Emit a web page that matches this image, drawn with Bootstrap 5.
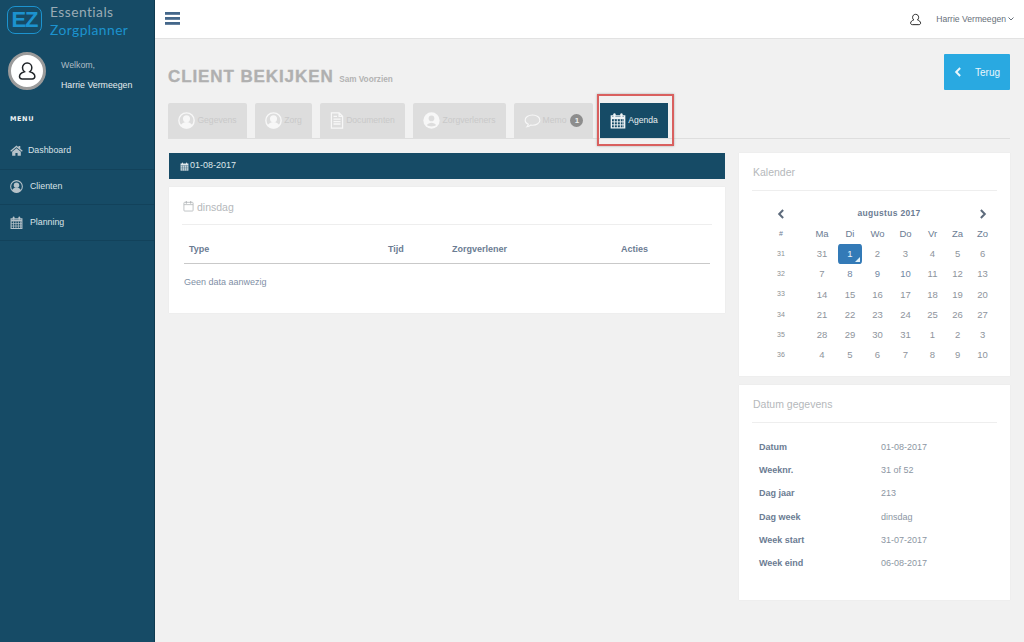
<!DOCTYPE html>
<html lang="nl">
<head>
<meta charset="utf-8">
<title>Client bekijken</title>
<link href="https://cdn.jsdelivr.net/npm/bootstrap@5.3.0/dist/css/bootstrap.min.css" rel="stylesheet">
<style>
html,body{height:100%}
body{background:#f1f1f1;font-family:"Liberation Sans",Arial,sans-serif;font-size:9px;color:#7187a3;overflow:hidden}
.shell{width:1024px;height:642px}
.side{width:155px;flex:none;background:#164b66;color:#dfe6ea;border-right:1px solid #0f3a50}
.brand{height:38px;padding:3px 0 0 7px}
.brand-mark{width:35px;height:28px;border:1.5px solid #1c93cf;border-radius:8px;color:#1c93cf;font:700 22px/25px "Liberation Sans",sans-serif;letter-spacing:-1px;text-align:center;margin-top:3px}
.brand-txt{margin-left:8px;font:400 13.8px/17.500px "Lato",sans-serif;letter-spacing:.45px}
.brand-a{color:#9aabb5}.brand-b{color:#1c93cf}
.who{padding:14px 0 0 8px;height:70px}
.avatar{width:38px;height:38px;border-radius:50%;background:#fff;border:3px solid #9b9b9b;flex:none}
.who-txt{margin-left:15px;font-size:8.8px;padding-top:7px}
.who-a{color:#aebcc5;height:20px;line-height:12px}
.who-b{color:#e6ecef;line-height:12px}
.menu-h{font:700 6.5px/10px "DejaVu Sans",sans-serif;letter-spacing:.6px;color:#eef2f4;padding:6px 0 0 10px;height:25px}
.nav-i{height:35.5px;color:#d9e2e7;font-size:8.8px;text-decoration:none;border-bottom:1px solid #12425b;gap:7px;padding-left:10px}
.nav-i svg{flex:none;color:#b6c2c9}
.nav-i.first{height:36.5px;gap:5px;padding-bottom:1px}
.main{flex:1;min-width:0}
.top{height:39px;background:#fff;border-bottom:1px solid #e2e2e2;padding:0 10px 0 10px}
.burger{width:15px;height:13px;fill:#44678a;margin-bottom:1px}
.usr{font-size:8.6px;color:#67707a;white-space:nowrap}
.usr-i{margin-right:14px;margin-left:-1px;color:#222}
.usr-c{margin-left:2px}
.body-wrap{padding:15px 14px 0 13px}
.head-row{height:49px}
.page-t{font-size:17px;line-height:20px;font-weight:700;color:#b0b0b0;letter-spacing:.9px;margin:13px 0 0;white-space:nowrap;-webkit-text-stroke:.35px #b0b0b0}
.page-t span{font-size:8.2px;letter-spacing:0;margin-left:0;color:#b3b3b3;-webkit-text-stroke:0}
.back{width:66px;height:36px;background:#29a9e1;color:#e8f6fc;border-radius:1px;font-size:10px;gap:13px;text-decoration:none;border:0}
.back:hover{background:#29a9e1;color:#e8f6fc}
.tabbar{height:36px;border-bottom:1px solid #dedede;gap:8px;position:relative}
.tabi{height:35px;background:#ddd;color:#c9c9c9;border-radius:2px 2px 0 0;font-size:8.6px;text-decoration:none;gap:2px;flex:none;justify-content:center}
.tabi svg{color:#f7f7f7}
.t1{width:79px}.t2{width:57px}.t3{width:85px}.t4{width:93px}.t5{width:79px}
.tabi.on{width:68px;margin-left:-1px;background:#164b66;color:#e8eef1;border-radius:0}
.tabi.on svg{color:#eef3f5}
.mark-box{position:absolute;left:429px;top:-9px;width:77px;height:52px;border:2px solid #d9605f;box-shadow:0 0 2px rgba(120,120,120,.6)}
.pill{background:#8d8d8d;color:#eee;border-radius:50%;width:13px;height:13px;font:700 8px/13px "Liberation Sans",sans-serif;text-align:center;margin-left:2px}
.cols{gap:14px;margin-top:14px;padding-left:1px}
.col-l{width:556px;flex:none}
.col-r{width:271px;flex:none}
.date-bar{height:26px;background:#164b66;color:#dfe7eb;font-size:9px;padding-left:11px;gap:1px}
.sheet{background:#fff;padding:0 15px;box-shadow:0 0 1px rgba(0,0,0,.08)}
.sheet-h{color:#b5b8bb;font-size:10.5px;line-height:14px;border-bottom:1px solid #eee;margin:0 -2px;padding:0 0 0 2px}
.day-card{height:126px;margin-top:8px}
.day-card .sheet-h{height:38px;padding:13px 0 0 1px;gap:3px}
.tbl{width:100%;border-collapse:collapse;table-layout:fixed;font-size:9px}
.tbl th{color:#6b7c93;font-weight:700;height:38px;vertical-align:bottom;padding:0 5px 10px;border-bottom:1px solid #c9c9c9;line-height:8px}
.tbl td{padding:12px 0;color:#7f8fa6}
.w1{width:199px}.w2{width:64px}.w3{width:169px}
.kal{height:223px}
.kal .sheet-h,.dat .sheet-h{height:38px;padding:12px 0 0 1px}
.cal{width:241px;border-collapse:separate;border-spacing:0;table-layout:fixed;margin-top:12px;text-align:center;font-size:9.5px;color:#8e949c}
.cal td,.cal th{padding:0;height:20.2px;font-weight:400}
.cal .cw0{width:54px}.cw28{width:28px}.cw27{width:27px}.cw29{width:29px}.cw25{width:25px}
.cal .wk{font-size:7px;color:#8b8f94}
.cal .dh th{color:#6b7c93}
.cal .mh th{font-weight:700;color:#6b7c93;font-size:8.5px;letter-spacing:.3px;height:21px}
.cal .mh svg{color:#5d6b7c}
.cal .flip{transform:scaleX(-1)}
.cal .blue{color:#7187a3}
.cal .pick{background:#337ab7;background-clip:padding-box;color:#e9f1f8;border-left:2px solid transparent;border-right:2px solid transparent;border-radius:4px;position:relative}
.cal .pick::after{content:"";position:absolute;right:2px;bottom:2px;border-left:5px solid transparent;border-bottom:5px solid #dff1fb}
.dat{height:215px;margin-top:9px}
.info{width:100%;border-collapse:collapse;margin-top:13px;font-size:9px;color:#8c96a3}
.info td{height:23.3px;padding:0 0 0 5px}
.info td:first-child{width:122px;font-weight:700;color:#6b7c93}
</style>
</head>
<body>
<svg width="0" height="0" class="position-absolute">
 <symbol id="u-line" viewBox="0 0 24 24"><path d="M12 2.500c-3.200 0-5.400 2.400-5.400 5.600 0 2 .8 3.600 2.200 4.700-3.300 1-5.800 3.200-5.800 5.900 0 1.900 1.500 2.800 3.200 2.800h12c1.700 0 3.200-.9 3.200-2.800 0-2.700-2.500-4.900-5.800-5.900 1.400-1.100 2.200-2.700 2.200-4.700 0-3.200-2.200-5.600-5.400-5.600z" fill="none" stroke="currentColor" stroke-width="1.800"/></symbol>
 <symbol id="u-circ" viewBox="0 0 24 24"><circle cx="12" cy="12" r="10.800" fill="none" stroke="currentColor" stroke-width="2"/><circle cx="12" cy="9.500" r="5" fill="currentColor"/><path d="M3.500 19.500c1.500-3.800 4.800-5.500 8.500-5.500s7 1.700 8.500 5.500c-2 2.300-5 3.700-8.500 3.700s-6.500-1.400-8.500-3.700z" fill="currentColor"/></symbol>
 <symbol id="u-solid" viewBox="0 0 24 24"><circle cx="12" cy="12" r="11.500" fill="currentColor"/><circle cx="12" cy="9" r="4" fill="#ddd"/><path d="M5.500 18.500c1-2.300 3.800-3.500 6.500-3.500s5.500 1.200 6.500 3.500c-1.800 1.400-4 2-6.500 2s-4.700-.6-6.500-2z" fill="#ddd"/></symbol>
 <symbol id="doc" viewBox="0 0 20 24"><path d="M2 1h11l5 5v17H2z M13 1v5h5 M5 10h10 M5 13.500h10 M5 17h10 M5 6h5" fill="none" stroke="currentColor" stroke-width="1.800"/></symbol>
 <symbol id="chat" viewBox="0 0 24 20"><path d="M12 1.500C6 1.500 1.500 4.800 1.500 8.800c0 2.500 1.800 4.700 4.500 6-.3 1.300-1 2.400-2 3.500 2.200-.3 4-1.200 5.300-2.400.9.100 1.800.2 2.700.2 6 0 10.500-3.300 10.500-7.300S18 1.500 12 1.500z" fill="none" stroke="currentColor" stroke-width="1.600"/></symbol>
 <symbol id="cal" viewBox="0 0 24 24"><path d="M2 5h20v18H2z" fill="none" stroke="currentColor" stroke-width="2"/><path d="M2 6.500h20V10H2z" fill="currentColor"/><path d="M2 14h20 M2 18.500h20 M6.500 10v13 M11 10v13 M15.500 10v13 M19.500 10v13" stroke="currentColor" stroke-width="1.400"/><rect x="5" y="1" width="3.400" height="6" rx="1.700" fill="currentColor"/><rect x="15.500" y="1" width="3.400" height="6" rx="1.700" fill="currentColor"/></symbol>
 <symbol id="cal-solid" viewBox="0 0 24 24"><path d="M1.500 4h21v19h-21z" fill="currentColor"/><path d="M1.500 9.500h21 M1.500 14h21 M1.500 18.500h21 M6.500 9.500V23 M12 9.500V23 M17.500 9.500V23" stroke="#164b66" stroke-width="1"/><rect x="5" y="1" width="3" height="5" rx="1.500" fill="currentColor"/><rect x="16" y="1" width="3" height="5" rx="1.500" fill="currentColor"/></symbol>
 <symbol id="cal-o" viewBox="0 0 24 24"><rect x="2" y="4" width="20" height="19" rx="1.500" fill="none" stroke="currentColor" stroke-width="1.800"/><path d="M2 9h20" stroke="currentColor" stroke-width="1.800"/><rect x="6" y="1" width="2.600" height="6" rx="1.300" fill="currentColor"/><rect x="15.400" y="1" width="2.600" height="6" rx="1.300" fill="currentColor"/></symbol>
 <symbol id="home" viewBox="0 0 24 20"><path d="M12 .8 .5 10.500l1.500 1.700L12 3.800l10 8.400 1.500-1.700-4.500-3.800V1.500h-3.400v2.500z M4 12.500 12 5.800l8 6.700v7h-6v-5h-4v5H4z" fill="currentColor"/></symbol>
 <symbol id="chev" viewBox="0 0 10 14"><path d="M8 1.500 2.500 7 8 12.500" fill="none" stroke="currentColor" stroke-width="2.800"/></symbol>
</svg>
<div class="shell d-flex">
 <aside class="side">
  <div class="brand d-flex">
   <div class="brand-mark">EZ</div>
   <div class="brand-txt"><div class="brand-a">Essentials</div><div class="brand-b">Zorgplanner</div></div>
  </div>
  <div class="who d-flex">
   <div class="avatar d-flex align-items-center justify-content-center text-dark"><svg width="20" height="20"><use href="#u-line"/></svg></div>
   <div class="who-txt"><div class="who-a">Welkom,</div><div class="who-b">Harrie Vermeegen</div></div>
  </div>
  <div class="menu-h">MENU</div>
  <nav>
   <a href="#" class="nav-i first d-flex align-items-center"><svg width="13" height="11"><use href="#home"/></svg>Dashboard</a>
   <a href="#" class="nav-i d-flex align-items-center"><svg width="13" height="13"><use href="#u-circ"/></svg>Clienten</a>
   <a href="#" class="nav-i d-flex align-items-center"><svg width="13" height="13"><use href="#cal"/></svg>Planning</a>
  </nav>
 </aside>
 <div class="main">
  <header class="top d-flex align-items-center justify-content-between">
   <svg class="burger" viewBox="0 0 15 13"><rect width="15" height="2.800"/><rect y="5" width="15" height="2.800"/><rect y="10" width="15" height="2.800"/></svg>
   <div class="usr d-flex align-items-center"><svg width="13" height="13" class="usr-i"><use href="#u-line"/></svg>Harrie Vermeegen<svg width="6" height="4" viewBox="0 0 6 4" class="usr-c"><path d="M.5.500 3 3 5.500.500" fill="none" stroke="#67707a"/></svg></div>
  </header>
  <div class="body-wrap">
   <div class="head-row d-flex justify-content-between align-items-start">
    <h1 class="page-t">CLIENT BEKIJKEN <span>Sam Voorzien</span></h1>
    <a href="#" class="back btn d-flex align-items-center justify-content-center p-0"><svg width="8" height="10"><use href="#chev"/></svg>Terug</a>
   </div>
   <div class="tabbar d-flex">
    <a href="#" class="tabi t1 d-flex align-items-center"><svg width="17" height="17"><use href="#u-circ"/></svg>Gegevens</a>
    <a href="#" class="tabi t2 d-flex align-items-center"><svg width="17" height="17"><use href="#u-circ"/></svg>Zorg</a>
    <a href="#" class="tabi t3 d-flex align-items-center"><svg width="14" height="17"><use href="#doc"/></svg>Documenten</a>
    <a href="#" class="tabi t4 d-flex align-items-center"><svg width="17" height="17"><use href="#u-solid"/></svg>Zorgverleners</a>
    <a href="#" class="tabi t5 d-flex align-items-center"><svg width="17" height="14"><use href="#chat"/></svg>Memo<span class="pill">1</span></a>
    <a href="#" class="tabi on d-flex align-items-center"><svg width="16" height="17"><use href="#cal"/></svg>Agenda</a>
    <div class="mark-box"></div>
   </div>
   <div class="cols d-flex align-items-start">
    <div class="col-l">
     <div class="date-bar d-flex align-items-center"><svg width="9" height="9"><use href="#cal-solid"/></svg>01-08-2017</div>
     <div class="sheet day-card">
      <div class="sheet-h d-flex align-items-start"><svg width="11" height="12"><use href="#cal-o"/></svg>dinsdag</div>
      <table class="tbl">
       <thead><tr><th class="w1">Type</th><th class="w2">Tijd</th><th class="w3">Zorgverlener</th><th>Acties</th></tr></thead>
       <tbody><tr><td colspan="4">Geen data aanwezig</td></tr></tbody>
      </table>
     </div>
    </div>
    <div class="col-r">
     <div class="sheet kal">
      <div class="sheet-h">Kalender</div>
      <table class="cal">
       <colgroup><col class="cw0"><col class="cw28"><col class="cw28"><col class="cw27"><col class="cw29"><col class="cw25"><col class="cw25"><col class="cw25"></colgroup>
       <thead>
        <tr class="mh"><th><svg width="8" height="10"><use href="#chev"/></svg></th><th colspan="6">augustus 2017</th><th><svg width="8" height="10" class="flip"><use href="#chev"/></svg></th></tr>
        <tr class="dh"><th class="wk">#</th><th>Ma</th><th>Di</th><th>Wo</th><th>Do</th><th>Vr</th><th>Za</th><th>Zo</th></tr>
       </thead>
       <tbody>
        <tr><td class="wk">31</td><td>31</td><td class="pick">1</td><td>2</td><td>3</td><td>4</td><td>5</td><td>6</td></tr>
        <tr><td class="wk">32</td><td>7</td><td class="blue">8</td><td class="blue">9</td><td class="blue">10</td><td>11</td><td>12</td><td>13</td></tr>
        <tr><td class="wk">33</td><td>14</td><td>15</td><td>16</td><td>17</td><td>18</td><td>19</td><td>20</td></tr>
        <tr><td class="wk">34</td><td>21</td><td>22</td><td>23</td><td>24</td><td>25</td><td>26</td><td>27</td></tr>
        <tr><td class="wk">35</td><td>28</td><td>29</td><td>30</td><td>31</td><td>1</td><td>2</td><td>3</td></tr>
        <tr><td class="wk">36</td><td>4</td><td>5</td><td>6</td><td>7</td><td>8</td><td>9</td><td>10</td></tr>
       </tbody>
      </table>
     </div>
     <div class="sheet dat">
      <div class="sheet-h">Datum gegevens</div>
      <table class="info">
       <tr><td>Datum</td><td>01-08-2017</td></tr>
       <tr><td>Weeknr.</td><td>31 of 52</td></tr>
       <tr><td>Dag jaar</td><td>213</td></tr>
       <tr><td>Dag week</td><td>dinsdag</td></tr>
       <tr><td>Week start</td><td>31-07-2017</td></tr>
       <tr><td>Week eind</td><td>06-08-2017</td></tr>
      </table>
     </div>
    </div>
   </div>
  </div>
 </div>
</div>
</body>
</html>
